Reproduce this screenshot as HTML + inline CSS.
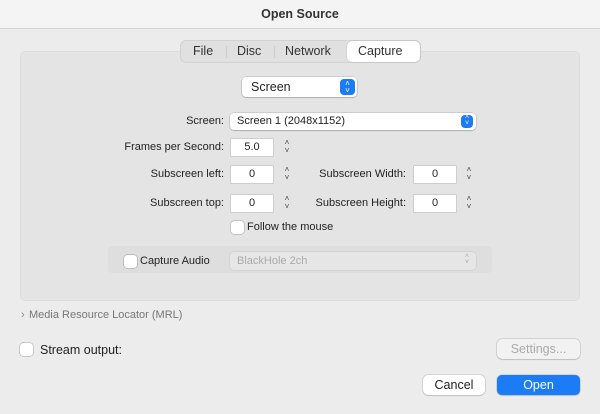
<!DOCTYPE html><html><head><style>
*{box-sizing:border-box;margin:0;padding:0}
body{width:600px;height:414px;background:#ececec;font-family:"Liberation Sans",sans-serif;font-size:11px;color:#222;position:relative;overflow:hidden}
.a{position:absolute}
.title{left:0;top:0;width:600px;height:29px;background:#f4f4f4;border-bottom:1px solid #d4d4d4;text-align:center;line-height:28px;font-weight:bold;font-size:12.5px;color:#333}
.grp{left:20px;top:51px;width:560px;height:250px;background:#e4e4e4;border-radius:5px;border:1px solid #dcdcdc}
.seg{left:180px;top:40px;width:241px;height:23px;background:#e0e0e0;border:1px solid #d2d2d2;border-radius:6px}
.tab{top:44px;font-size:12.5px;color:#333}
.sel{left:347px;top:41px;width:73px;height:21px;background:#fff;border-radius:5px;box-shadow:0 0 1px rgba(0,0,0,.3)}
.pop{background:#fff;border-radius:4px;box-shadow:0 0 0 .5px rgba(0,0,0,.2),0 1px 1px rgba(0,0,0,.15)}
.arr{background:#1a7cf6;border-radius:4px;color:#fff}
.fld{background:#fff;height:17px;width:42px;text-align:center;line-height:17px;box-shadow:0 0 0 .5px rgba(0,0,0,.2)}
.lbl{text-align:right;width:200px}
.stp{width:12px;height:18px;font-size:8px;line-height:8px;text-align:center;color:#444}
.cb{width:13px;height:13px;background:#fff;border-radius:3px;box-shadow:0 0 0 .5px rgba(0,0,0,.3)}
.btn{background:#fff;border-radius:5px;box-shadow:0 0 0 .5px rgba(0,0,0,.2),0 1px 1px rgba(0,0,0,.1);text-align:center;line-height:20px;font-size:12.5px}
</style></head><body>
<div class="a title">Open Source</div>
<div class="a grp"></div>
<div class="a seg"></div>
<div class="a sel"></div>
<div class="a tab" style="left:193px">File</div>
<div class="a" style="left:226px;top:46px;width:1px;height:12px;background:#ccc"></div>
<div class="a tab" style="left:237px">Disc</div>
<div class="a" style="left:274px;top:46px;width:1px;height:12px;background:#ccc"></div>
<div class="a tab" style="left:285px">Network</div>
<div class="a tab" style="left:358px">Capture</div>

<div class="a pop" style="left:242px;top:77px;width:115px;height:20px"></div>
<div class="a" style="left:251px;top:80px;font-size:12.5px">Screen</div>
<div class="a arr" style="left:340px;top:79px;width:15px;height:16px;font-size:8px;line-height:7px;text-align:center;padding-top:1px">˄<br>˅</div>

<div class="a lbl" style="left:24px;top:115px">Screen:</div>
<div class="a pop" style="left:230px;top:113px;width:246px;height:17px"></div>
<div class="a" style="left:237px;top:115px">Screen 1 (2048x1152)</div>
<div class="a arr" style="left:461px;top:115px;width:12px;height:13px;font-size:7px;line-height:6px;text-align:center">˄<br>˅</div>

<div class="a lbl" style="left:24px;top:141px">Frames per Second:</div>
<div class="a fld" style="left:231px;top:139px">5.0</div>
<div class="a stp" style="left:281px;top:139px">˄<br>˅</div>

<div class="a lbl" style="left:24px;top:168px">Subscreen left:</div>
<div class="a fld" style="left:231px;top:166px">0</div>
<div class="a stp" style="left:281px;top:166px">˄<br>˅</div>
<div class="a lbl" style="left:206px;top:168px">Subscreen Width:</div>
<div class="a fld" style="left:414px;top:166px">0</div>
<div class="a stp" style="left:463px;top:166px">˄<br>˅</div>

<div class="a lbl" style="left:24px;top:197px">Subscreen top:</div>
<div class="a fld" style="left:231px;top:195px">0</div>
<div class="a stp" style="left:281px;top:195px">˄<br>˅</div>
<div class="a lbl" style="left:206px;top:197px">Subscreen Height:</div>
<div class="a fld" style="left:414px;top:195px">0</div>
<div class="a stp" style="left:463px;top:195px">˄<br>˅</div>

<div class="a cb" style="left:231px;top:221px"></div>
<div class="a" style="left:247px;top:221px">Follow the mouse</div>

<div class="a" style="left:108px;top:246px;width:384px;height:27px;background:#dedede;border-radius:4px"></div>
<div class="a cb" style="left:124px;top:255px"></div>
<div class="a" style="left:140px;top:255px">Capture Audio</div>
<div class="a" style="left:230px;top:252px;width:246px;height:18px;background:#e6e6e6;border-radius:4px;box-shadow:0 0 0 .5px rgba(0,0,0,.1)"></div>
<div class="a" style="left:237px;top:255px;color:#aaa">BlackHole 2ch</div>
<div class="a" style="left:465px;top:254px;font-size:7px;line-height:6px;color:#aaa">˄<br>˅</div>

<div class="a" style="left:21px;top:309px;color:#888">›</div>
<div class="a" style="left:29px;top:309px;color:#777">Media Resource Locator (MRL)</div>

<div class="a cb" style="left:20px;top:343px"></div>
<div class="a" style="left:40px;top:343px;font-size:12.5px">Stream output:</div>
<div class="a btn" style="left:497px;top:339px;width:83px;height:20px;color:#aaa;background:#f2f2f2">Settings...</div>
<div class="a btn" style="left:423px;top:375px;width:62px;height:20px">Cancel</div>
<div class="a btn" style="left:497px;top:375px;width:83px;height:20px;background:#1b7cf5;color:#fff">Open</div>
</body></html>
